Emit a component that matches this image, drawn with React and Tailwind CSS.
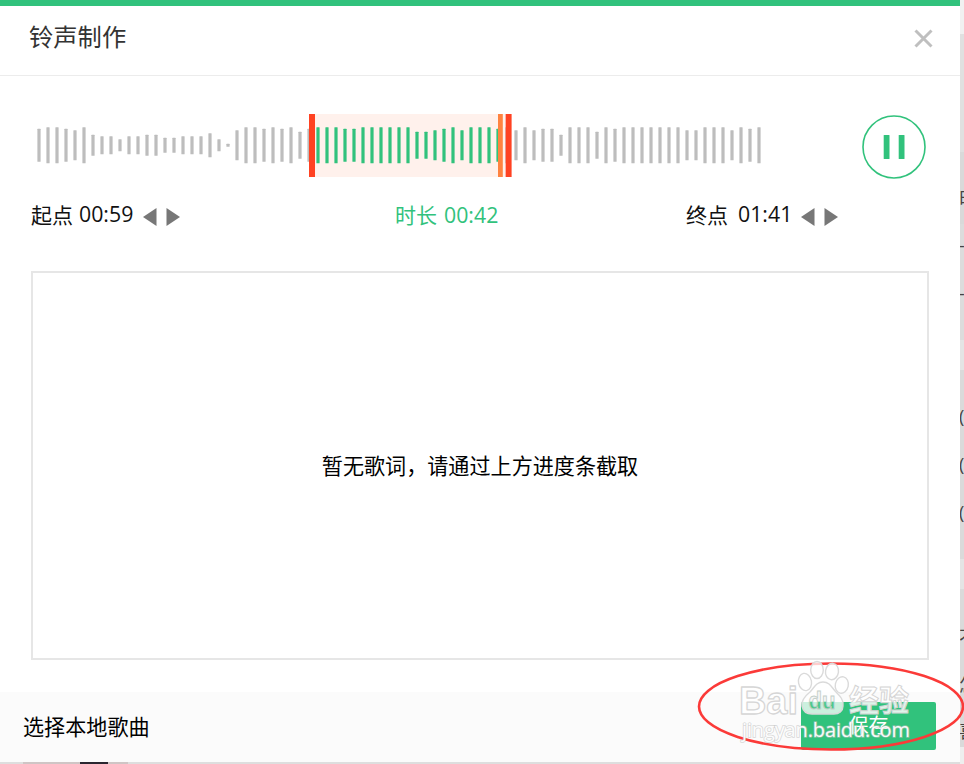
const BARS = [
  33, 36, 36, 33, 30, 36, 21, 18, 18, 12, 18, 18, 21, 21, 15, 15, 18, 18, 18, 24,
  12, 3, 30, 36, 36, 33, 36, 33, 36, 27, 33, 36, 36, 36, 33, 33, 36, 36, 36, 36,
  36, 36, 27, 27, 30, 33, 36, 30, 36, 36, 36, 33, 36, 30, 36, 30, 33, 33, 21, 36,
  36, 36, 27, 36, 33, 36, 36, 36, 36, 36, 36, 36, 30, 30, 36, 36, 36, 30, 36, 33,
  36,
]

const SEL_START = 31
const SEL_END = 51

// rows of the song list that show past the dialog's right edge
const ROWS = [
  { h: 34, bg: 'bg-[#f1f1f1]', text: '' },
  { h: 118, bg: 'bg-[#e0e0e0]', text: '' },
  { h: 72, bg: 'bg-[#d9d9d9]', text: '曲', pad: 32 },
  { h: 48, bg: 'bg-[#dcdcdc]', text: '-', pad: 9 },
  { h: 68, bg: 'bg-[#dcdcdc]', text: '-', pad: 9 },
  { h: 30, bg: 'bg-[#e4e4e4]', text: '' },
  { h: 24, bg: 'bg-[#dadada]', text: '' },
  { h: 48, bg: 'bg-[#dadada]', text: '(', pad: 10 },
  { h: 48, bg: 'bg-[#dadada]', text: '(', pad: 10 },
  { h: 69, bg: 'bg-[#dadada]', text: '(', pad: 10 },
  { h: 30, bg: 'bg-[#e4e4e4]', text: '' },
  { h: 82, bg: 'bg-[#dadada]', text: '不', pad: 36 },
  { h: 44, bg: 'bg-[#dadada]', text: '怎', pad: 2 },
  { h: 32, bg: 'bg-[#dadada]', text: '喜', pad: 4 },
  { h: 17, bg: 'bg-[#eeeeee]', text: '' },
]

function Waveform() {
  return (
    <svg width="740" height="64" viewBox="30 114 740 64" className="block shrink-0">
      <rect x="315" y="114" width="190" height="63" fill="#fff1ec" />
      {BARS.map((h, i) => (
        <rect
          key={i}
          x={37.4 + i * 9}
          y={145.3 - h / 2}
          width="3.2"
          height={h}
          rx="0.5"
          fill={i >= SEL_START && i <= SEL_END ? '#31c27c' : '#bdbdbd'}
        />
      ))}
      <rect x="309" y="114" width="6" height="63" fill="#ff4222" />
      <rect x="498" y="114" width="4.8" height="63" fill="#ff8340" />
      <rect x="505.6" y="114" width="6" height="63" fill="#ff4222" />
    </svg>
  )
}

function PauseButton() {
  return (
    <button className="shrink-0">
      <svg width="64" height="64" viewBox="0 0 64 64" className="block">
        <circle cx="32" cy="32" r="31" fill="none" stroke="#31c27c" strokeWidth="1.6" />
        <rect x="21.7" y="20" width="5.8" height="24" rx="0.6" fill="#31c27c" />
        <rect x="36.7" y="20" width="5.8" height="24" rx="0.6" fill="#31c27c" />
      </svg>
    </button>
  )
}

function Stepper() {
  return (
    <svg width="38" height="18" viewBox="0 0 38 18" className="block" fill="#777">
      <path d="M13.5 0v18L0 9z" />
      <path d="M23.5 0v18L37 9z" />
    </svg>
  )
}

function Watermark() {
  return (
    <svg
      width="270"
      height="104"
      viewBox="694 660 270 104"
      className="pointer-events-none absolute top-[660px] left-[694px]"
    >
      <defs>
        <linearGradient id="du" gradientUnits="userSpaceOnUse" x1="0" y1="701" x2="0" y2="702.5">
          <stop offset="0" stopColor="#f6f6f6" />
          <stop offset="1" stopColor="#4cc98c" />
        </linearGradient>
      </defs>
      <ellipse cx="831" cy="706.5" rx="132" ry="43" fill="none" stroke="#fb3a38" strokeWidth="2.6" />
      <g fill="#fff" fillOpacity="0.75" stroke="#dadada" strokeWidth="1.4">
        <ellipse cx="805" cy="682" rx="6.5" ry="8.7" transform="rotate(-10 805 682)" />
        <ellipse cx="817" cy="670" rx="6.3" ry="8.5" />
        <ellipse cx="832" cy="671.5" rx="6.5" ry="8.2" transform="rotate(8 832 671.5)" />
        <ellipse cx="841.8" cy="685" rx="6.5" ry="8.3" transform="rotate(12 841.8 685)" />
        <path d="M823 682c-7 0-9 6-13 10-5 4-9 8-8 14 1 5 5 8 10 8h22c5 0 9-3 9-8 1-6-3-10-7-14-4-4-6-10-13-10z" />
      </g>
      <g fontFamily='"Liberation Sans", sans-serif' fontWeight="700">
        <text
          x="739"
          y="714"
          fontSize="39"
          textLength="59"
          lengthAdjust="spacingAndGlyphs"
          fill="#fff"
          stroke="#d6d6d6"
          strokeWidth="1.3"
          strokeLinejoin="round"
        >
          Bai
        </text>
        <text
          x="808.5"
          y="709"
          fontSize="23"
          textLength="27"
          lengthAdjust="spacingAndGlyphs"
          fill="url(#du)"
          stroke="#c4cfc9"
          strokeWidth="0.9"
        >
          du
        </text>
      </g>
      <text
        x="849"
        y="711"
        fontSize="30"
        fontWeight="700"
        fontFamily='"Noto Sans CJK SC", sans-serif'
        fill="#fff"
        fillOpacity="0.85"
        stroke="#d4d4d4"
        strokeWidth="1"
      >
        经验
      </text>
      <text
        x="742"
        y="736.5"
        fontSize="20"
        textLength="168"
        fontFamily='"Open Sans", "Noto Sans", sans-serif'
        fill="#fff"
        fillOpacity="0.95"
        stroke="#c0c0c0"
        strokeOpacity="0.6"
        strokeWidth="1.6"
        paintOrder="stroke"
      >
        jingyan.baidu.com
      </text>
    </svg>
  )
}

export default function App() {
  return (
    <div className="relative flex h-[764px] w-[964px] overflow-hidden bg-[#dcdcdc] font-['Open_Sans','Noto_Sans_CJK_SC',sans-serif] text-[#111]">
      <div className="flex w-[960px] shrink-0 flex-col">
        <div className="flex h-[762px] flex-col border-t-6 border-[#31c27c] bg-white">
          {/* Title bar */}
          <header className="flex h-[70px] shrink-0 items-center justify-between border-b border-[#ececec] pr-[27px] pb-[7px] pl-[29px]">
            <h1 className="text-[24.3px] leading-8 text-[#333]">铃声制作</h1>
            <svg width="19" height="19" viewBox="0 0 19 19" stroke="#bfbfbf" strokeWidth="3" className="mt-[3px]">
              <path d="M1.5 1.5l16 16M17.5 1.5l-16 16" />
            </svg>
          </header>

          {/* Waveform */}
          <section className="flex shrink-0 items-start justify-between pt-[38px] pr-[34px] pl-[30px]">
            <Waveform />
            <div className="pt-px">
              <PauseButton />
            </div>
          </section>

          {/* Times */}
          <section className="mt-[15px] flex h-7 shrink-0 items-center pr-[121px] pl-[31px] text-[21px] leading-7 whitespace-nowrap">
            <div className="flex items-center">
              <span className="w-[48px] pt-0.5">起点</span>
              <span className="w-[64px] text-[21.3px]">00:59</span>
              <span className="pt-1.5"><Stepper /></span>
            </div>
            <div className="ml-[214px] flex items-center text-[#31c27c]">
              <span className="w-[49px] pt-0.5">时长</span>
              <span className="pt-0.5 text-[21.3px]">00:42</span>
            </div>
            <div className="ml-auto flex items-center">
              <span className="w-[52px] pt-0.5">终点</span>
              <span className="w-[63px] text-[21.3px]">01:41</span>
              <span className="pt-1.5"><Stepper /></span>
            </div>
          </section>

          {/* Lyrics */}
          <div className="mx-[31px] mt-[43px] flex h-[389px] shrink-0 items-center justify-center border-2 border-[#e6e6e6] text-[21.1px] text-black">
            暂无歌词，请通过上方进度条截取
          </div>

          {/* Footer */}
          <footer className="mt-auto flex h-[70px] shrink-0 items-center justify-between bg-[#fbfbfb] pr-6 pl-[23px]">
            <span className="text-[21.1px] text-black">选择本地歌曲</span>
            <button className="mt-[-3px] h-12 w-[135px] rounded-xs bg-[#31c27c] text-[20px] text-white">
              保存
            </button>
          </footer>
        </div>
        <div className="flex h-0.5 bg-[#dedede] pl-[23px]">
          <div className="flex w-[105px] justify-center bg-[#cfc5c5] pl-9">
            <div className="w-7 bg-[#2a2630]" />
          </div>
        </div>
      </div>

      <aside className="w-1 shrink-0 overflow-hidden">
        {ROWS.map((r, i) => (
          <div key={i} className={`overflow-hidden ${r.bg}`} style={{ height: r.h, paddingTop: r.pad }}>
            <span className="-ml-px block w-6 text-[18px] leading-6 text-[#444]">{r.text}</span>
          </div>
        ))}
      </aside>

      <Watermark />
    </div>
  )
}
